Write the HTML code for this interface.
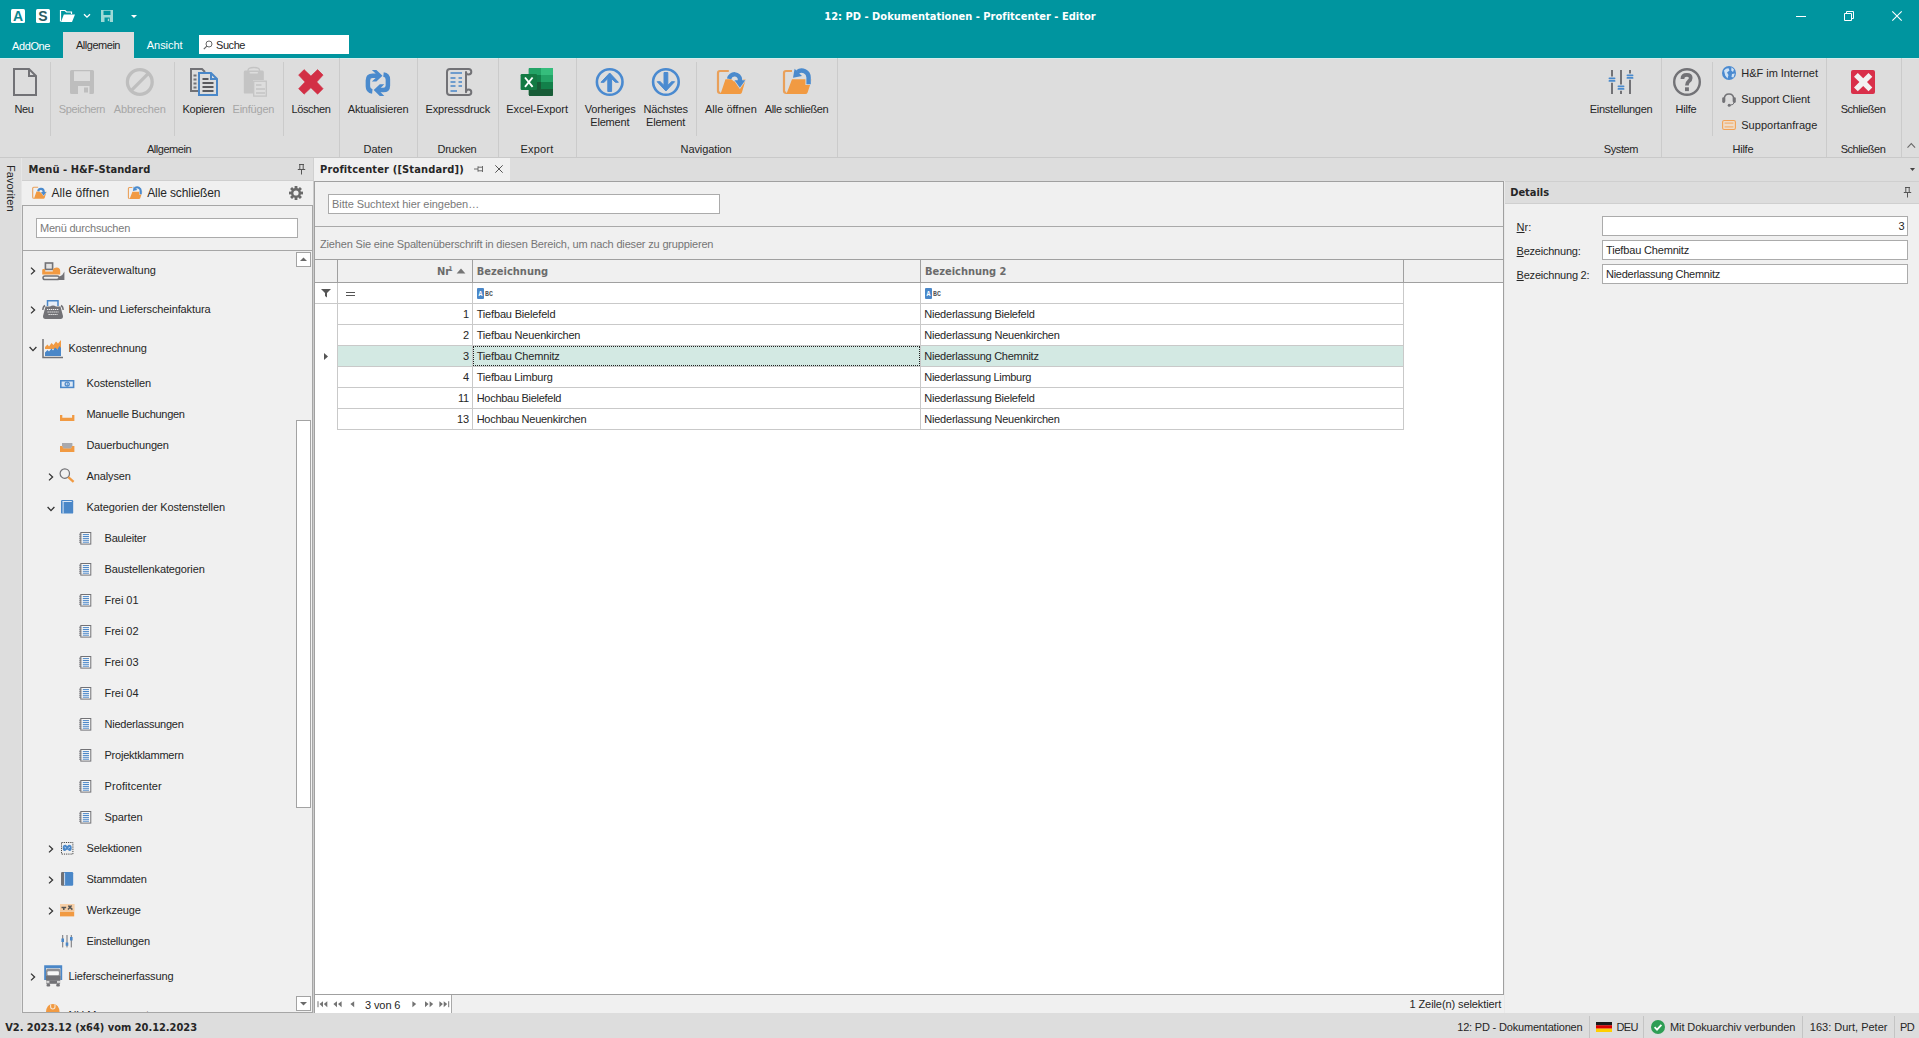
<!DOCTYPE html>
<html lang="de">
<head>
<meta charset="utf-8">
<title>12: PD - Dokumentationen - Profitcenter - Editor</title>
<style>
*{box-sizing:border-box;margin:0;padding:0}
html,body{width:1919px;height:1038px;overflow:hidden;background:#dddddd}
body{font-family:"Liberation Sans",sans-serif;font-size:11px;color:#262626;letter-spacing:-0.17px}
#app{position:relative;width:1919px;height:1038px;overflow:hidden;background:#dddddd}
.a{position:absolute;white-space:nowrap}
.b{font-family:"DejaVu Sans Condensed","DejaVu Sans","Liberation Sans",sans-serif;font-stretch:condensed;font-weight:bold;letter-spacing:0}
.t{position:absolute;white-space:nowrap;line-height:14px;height:14px}
.c{text-align:center}
svg{position:absolute;overflow:visible}
/* ribbon */
.rl{position:absolute;top:103px;width:120px;margin-left:-60px;text-align:center;line-height:13px;white-space:nowrap}
.gl{position:absolute;top:142px;width:120px;margin-left:-60px;text-align:center;line-height:14px;color:#3a3a3a}
.gs{position:absolute;top:58px;height:99px;width:1px;background:#cbcbcb}
.is{position:absolute;top:62px;height:74px;width:1px;background:#cbcbcb}
.dis{color:#a6a6a6}
/* tree */
.tr{position:absolute;left:0;white-space:nowrap;line-height:14px;height:14px}
/* grid */
.cell{position:absolute;height:21px;line-height:20px;white-space:nowrap;border-right:1px solid #c6c6c6;border-bottom:1px solid #c6c6c6;background:#fff;padding:0 3px}
.sel{background:#d0e6e2}
.hd{position:absolute;top:259px;height:23px;line-height:22px;background:#f0f0f0;border-right:1px solid #a9a9a9;border-bottom:1px solid #a9a9a9;color:#6e6e6e;padding:0 4px}
.inp{position:absolute;background:#fff;border:1px solid #ababab;height:20px;line-height:18px;padding:0 3px;white-space:nowrap}
.sb{position:absolute;top:1015px;height:23px;line-height:23px;white-space:nowrap}
.sbs{position:absolute;top:1016px;height:22px;width:1px;background:#c4c4c4}
</style>
</head>
<body>
<div id="app">
<!--TITLE-->
<div class="a" style="left:0;top:0;width:1919px;height:58px;background:#00959f"></div>
<!-- app icons -->
<div class="a c" style="left:11px;top:9px;width:14px;height:14px;background:#fff;border-radius:1.5px;color:#0a858f;font-weight:bold;font-size:14px;line-height:14.5px;letter-spacing:0">A</div>
<div class="a c" style="left:36px;top:9px;width:14px;height:14px;background:#fff;border-radius:1.5px;color:#2b5a61;font-weight:bold;font-size:14px;line-height:14.5px;letter-spacing:0">S</div>
<svg style="left:60px;top:9px" width="16" height="14" viewBox="0 0 16 14"><path d="M0.5 12.5V1.5H5l1.5 1.5H11.5V5" fill="none" stroke="#fff" stroke-width="1.2"/><path d="M1 13L3.8 5.5H15L12 13Z" fill="#fff"/></svg>
<svg style="left:83px;top:13px" width="8" height="6" viewBox="0 0 8 6"><path d="M1 1.2L4 4.2L7 1.2" fill="none" stroke="#fff" stroke-width="1.3"/></svg>
<svg style="left:101px;top:10px" width="12" height="12" viewBox="0 0 12 12"><path d="M0 0H12V12H0Z M2.5 0.8V5H9.5V0.8Z M3.5 7.5V12H8.8V7.5Z" fill="#9fd9d6" fill-rule="evenodd"/><rect x="6.8" y="8.7" width="1.3" height="2.4" fill="#9fd9d6"/></svg>
<svg style="left:131px;top:15px" width="6" height="3" viewBox="0 0 6 3"><path d="M0 0H6L3 3Z" fill="#fff"/></svg>
<!-- window title -->
<div class="t b" style="left:824.3px;top:10px;color:#fff;letter-spacing:0.02px">12: PD - Dokumentationen - Profitcenter - Editor</div>
<!-- window buttons -->
<svg style="left:1796px;top:16px" width="10" height="2" viewBox="0 0 10 2"><rect x="0" y="0" width="10" height="1" fill="#fff"/></svg>
<svg style="left:1844px;top:11px" width="10" height="10" viewBox="0 0 10 10"><path d="M0.5 2.5H7.5V9.5H0.5Z M2.5 2.5V0.5H9.5V7.5H7.5" fill="none" stroke="#fff" stroke-width="1"/></svg>
<svg style="left:1892px;top:11px" width="10" height="10" viewBox="0 0 10 10"><path d="M0.3 0.3L9.7 9.7M9.7 0.3L0.3 9.7" fill="none" stroke="#fff" stroke-width="1.1"/></svg>
<!-- tabs -->
<div class="t" style="left:12px;top:39px;color:#fff;letter-spacing:-0.38px">AddOne</div>
<div class="a" style="left:63px;top:32px;width:71px;height:26px;background:#dddddd"></div>
<div class="t" style="left:76px;top:38px;color:#262626;letter-spacing:-0.48px">Allgemein</div>
<div class="t" style="left:146.8px;top:38px;color:#fff;letter-spacing:-0.05px">Ansicht</div>
<div class="a" style="left:199px;top:35px;width:150px;height:19px;background:#fff"></div>
<svg style="left:203px;top:40px" width="10" height="10" viewBox="0 0 10 10"><circle cx="6" cy="4" r="3" fill="none" stroke="#666" stroke-width="1"/><path d="M3.8 6.2L0.8 9.2" stroke="#666" stroke-width="1.2"/></svg>
<div class="t" style="left:216px;top:38px;color:#262626;letter-spacing:-0.43px">Suche</div>
<!--RIBBON-->
<div class="a" style="left:0;top:58px;width:63px;height:1px;background:#d6ecec"></div>
<div class="a" style="left:134px;top:58px;width:1785px;height:1px;background:#d6ecec"></div>
<div class="a" style="left:0;top:157px;width:1919px;height:1px;background:#c9c9c9"></div>
<!-- separators -->
<div class="is" style="left:50px"></div><div class="is" style="left:174px"></div><div class="is" style="left:283px"></div><div class="is" style="left:696px"></div><div class="is" style="left:1712px"></div>
<div class="gs" style="left:339px"></div><div class="gs" style="left:417px"></div><div class="gs" style="left:498px"></div><div class="gs" style="left:576px"></div><div class="gs" style="left:837px"></div>
<div class="gs" style="left:1661px"></div><div class="gs" style="left:1826px"></div><div class="gs" style="left:1901px"></div>
<!-- icons: drawn in page coordinates -->
<svg style="left:0;top:58px" width="1919" height="100" viewBox="0 58 1919 100">
<!-- Neu -->
<path d="M14 69H29L36 76V95H14Z M29 69V76H36" fill="none" stroke="#727276" stroke-width="2" stroke-linejoin="miter"/>
<!-- Speichern (disabled) -->
<path d="M71.5 70H92.5Q94 70 94 71.5V92.5Q94 94 92.5 94H89.5V86H78V94H71.5Q70 94 70 92.5V71.5Q70 70 71.5 70Z M74 71.3V81H90V71.3Z" fill="#bebebe" fill-rule="evenodd"/>
<rect x="84" y="87.5" width="4" height="5" fill="#bebebe"/>
<!-- Abbrechen (disabled) -->
<circle cx="139.8" cy="82" r="12.4" fill="none" stroke="#bebebe" stroke-width="3.3"/>
<path d="M131.2 90.6L148.4 73.4" stroke="#bebebe" stroke-width="3.3"/>
<!-- Kopieren -->
<path d="M198 91H191V69H202L205 72" fill="none" stroke="#727276" stroke-width="2"/>
<path d="M193.5 75.5H196.5M193.5 79.5H196.5M193.5 83.5H196.5M193.5 87.5H196.5" stroke="#727276" stroke-width="1.8"/>
<path d="M199 73H211L217 79V95H199Z M211 73V79H217" fill="none" stroke="#4a87c8" stroke-width="2"/>
<path d="M202.5 79H208.5M202.5 83H213.5M202.5 87H213.5M202.5 91H213.5" stroke="#5a5a5e" stroke-width="1.9"/>
<!-- Einfügen (disabled) -->
<path d="M245 70.5H262.5Q263.8 70.5 263.8 72V80H253V93.6H245Q243.8 93.6 243.8 92.4V72Q243.8 70.5 245 70.5Z" fill="#c4c4c4"/>
<path d="M248 72.5V70.5Q248 67.5 253.8 67.5T259.6 70.5V72.5Z" fill="none" stroke="#c4c4c4" stroke-width="1.3"/>
<rect x="249.5" y="72" width="8.6" height="1.6" rx="0.8" fill="#dddddd"/>
<rect x="253.7" y="81.2" width="12.6" height="14.9" fill="none" stroke="#c4c4c4" stroke-width="1.3"/>
<path d="M256 85H261.5M256 89H265M256 93H265" stroke="#c4c4c4" stroke-width="1.7"/>
<!-- Löschen -->
<path d="M304.1 69.6L310.9 76.0L317.6 69.6L323.1 75.1L316.8 81.9L323.1 88.7L317.6 94.2L310.9 87.8L304.1 94.2L298.6 88.7L305.0 81.9L298.6 75.1Z" fill="#d22f45" stroke="#d22f45" stroke-width="0.6" stroke-linejoin="round"/>
<!-- Aktualisieren -->
<g fill="none" stroke="#4a8acd" stroke-width="4.5">
<path d="M377 75.8H372.6Q367.9 75.8 367.9 80.5V86.3Q367.9 91 372.3 91.4"/>
<path d="M379 90.1H383.2Q387.9 90.1 387.9 85.4V79.6Q387.9 75 383.5 74.5"/>
</g>
<path d="M371.9 70.1H376.4L382.5 75.8L376.4 81.6H371.9L375.6 77.9V73.6Z M384.3 84.3H379.8L373.7 90.1L379.8 95.9H384.3L380.6 92.2V88Z" fill="#4a8acd"/>
<!-- Expressdruck -->
<path d="M466 69H450Q447 69 447 72V92Q447 95 450 95H468.5Q471.3 95 471.3 92.2Q471.3 89.6 468.6 89.6Q466 89.6 466 92.2V72Q466 74.6 468.6 74.6Q471.3 74.6 471.3 71.8Q471.3 69 468.5 69H466" fill="none" stroke="#727276" stroke-width="2" stroke-linejoin="round"/>
<path d="M450.5 73H462M450.5 78H455.5M450.5 82H455.5M450.5 86H455.5M450.5 91H457M458.5 78H462M458.5 82H462M458.5 86H462" stroke="#4a87c8" stroke-width="1.7"/>
<!-- Excel -->
<rect x="528.8" y="68" width="24.2" height="28" rx="1.5" fill="#1f7c47"/>
<rect x="541" y="68" width="12" height="7" fill="#35bd7c"/><path d="M551.5 68Q553 68 553 69.5V75H541V68Z" fill="#35bd7c"/>
<rect x="528.8" y="68" width="12.2" height="7" fill="#23a366"/>
<rect x="541" y="75" width="12" height="7" fill="#23a366"/>
<rect x="528.8" y="75" width="12.2" height="7" fill="#12804a"/>
<rect x="541" y="82" width="12" height="7" fill="#12804a"/>
<rect x="528.8" y="82" width="24.2" height="14" rx="1.5" fill="#185c37"/><rect x="541" y="82" width="12" height="7" fill="#12804a"/><rect x="528.8" y="82" width="12.2" height="7" fill="#185c37"/>
<rect x="520.6" y="74" width="16.4" height="16" rx="1.2" fill="#137a43"/>
<path d="M525 77.5L532.6 86.8M532.6 77.5L525 86.8" stroke="#fff" stroke-width="1.9"/>
<!-- Vorheriges -->
<circle cx="609.7" cy="82" r="12.8" fill="none" stroke="#4a8ad0" stroke-width="2.6"/>
<path d="M609.7 73L618.4 82.3L615.4 82.3L611.6 78.6V91.5H607.8V78.6L604 82.3L601 82.3Z" fill="#4a8ad0" stroke="#4a8ad0" stroke-width="1" stroke-linejoin="round"/>
<!-- Nächstes -->
<circle cx="665.9" cy="82" r="12.8" fill="none" stroke="#4a8ad0" stroke-width="2.6"/>
<path d="M665.9 91L674.6 81.7L671.6 81.7L667.8 85.4V72.5H664V85.4L660.2 81.7L657.2 81.7Z" fill="#4a8ad0" stroke="#4a8ad0" stroke-width="1" stroke-linejoin="round"/>
<!-- Alle öffnen -->
<path d="M728.8 71H720Q718 71 718 73V91Q718 92.9 720.2 92.9" fill="none" stroke="#e9a05a" stroke-width="2.2"/>
<path d="M725.5 79.2H745.8L741.9 92.4Q741.3 93.9 739.6 93.9H719.5L721.2 92Z" fill="#f19a42"/>
<g fill="none" stroke="#dddddd" stroke-width="6.4"><path d="M731.5 79.4A5.4 5.4 0 0 1 740 79.6V82"/></g>
<path d="M733.2 79.4H746.6L739.9 89Z" fill="#dddddd"/>
<path d="M729.1 78.8A5.5 5.5 0 0 1 740 79.6V81.5" fill="none" stroke="#4a8acd" stroke-width="4.4"/>
<path d="M734.5 80.3H745.3L739.9 87.8Z" fill="#4a8acd"/>
<!-- Alle schließen -->
<path d="M792 71H786Q784 71 784 73V91Q784 92.9 786.2 92.9" fill="none" stroke="#e9a05a" stroke-width="2.2"/>
<path d="M792 79.2H812L807.6 92.4Q807 93.9 805.3 93.9H785.5L787.2 92Z" fill="#f19a42"/>
<path d="M808.6 85V79" fill="none" stroke="#dddddd" stroke-width="6.4"/>
<path d="M808.6 84.2V77.5A7 7 0 0 0 797.4 71.9" fill="none" stroke="#4a8acd" stroke-width="4.4"/>
<path d="M793 77.8L794.6 68.7L802 76Z" fill="#4a8acd"/>
<!-- Einstellungen -->
<path d="M1612 70V94M1621 70V94M1630 70V94" stroke="#727276" stroke-width="2"/>
<g stroke="#dddddd" stroke-width="6.4"><path d="M1608.6 79.6H1615.4M1617.6 87.6H1624.4M1626.6 76.6H1633.4"/></g>
<g stroke="#4a8acd" stroke-width="1.7" stroke-linecap="round"><path d="M1609.4 78.3H1614.6M1609.4 80.9H1614.6M1618.4 86.3H1623.6M1618.4 88.9H1623.6M1627.4 75.3H1632.6M1627.4 77.9H1632.6"/></g>
<!-- Hilfe -->
<circle cx="1687" cy="82" r="12.8" fill="none" stroke="#727276" stroke-width="2.4"/>
<path d="M1682.4 79Q1682.4 74.9 1686.8 74.9Q1690.7 74.9 1690.7 78Q1690.7 80 1688.6 81.4Q1686.9 82.6 1686.9 85.6" fill="none" stroke="#727276" stroke-width="3.7"/>
<rect x="1685" y="87.3" width="3.9" height="3.8" fill="#727276"/>
<!-- globe -->
<circle cx="1729" cy="73" r="7" fill="#4a8ad0"/>
<path d="M1724 70.5Q1726 68 1728.5 68.2L1729.5 70.5L1727 72.5L1728.5 75L1727.5 78.5L1725.2 75.5Z M1731.5 67.2L1734 69.5L1733 72L1731.2 70.5Z M1732 74L1734.8 73.5L1733.5 77.5L1731.5 77Z" fill="#cfe2f5"/>
<!-- headset -->
<path d="M1724.4 101V98.8Q1724.4 94 1729 94Q1733.6 94 1733.6 98.8V101" fill="none" stroke="#727276" stroke-width="1.5"/>
<rect x="1722.2" y="97.3" width="3" height="5.6" rx="1.3" fill="#727276"/><rect x="1732.8" y="97.3" width="3" height="5.6" rx="1.3" fill="#727276"/>
<path d="M1734.2 102.5Q1733.8 105 1730 105.2" fill="none" stroke="#727276" stroke-width="1"/><circle cx="1729.2" cy="105.2" r="1.5" fill="#727276"/>
<!-- supportanfrage -->
<rect x="1722.6" y="120.5" width="12.8" height="9" rx="1.6" fill="#efdcc8" stroke="#f2a255" stroke-width="1.1"/>
<path d="M1724.6 123.1H1733.4M1724.6 126.9H1733.4" stroke="#f2a255" stroke-width="0.9"/>
<!-- Schließen -->
<rect x="1851" y="70" width="24" height="24" rx="2" fill="#d9304a"/>
<path d="M1857.8 73.0L1863.2 78.3L1868.5 73.0L1872.3 76.8L1867.0 82.1L1872.3 87.4L1868.5 91.2L1863.2 85.9L1857.8 91.2L1854.0 87.4L1859.4 82.1L1854.0 76.8Z" fill="#f2f2f2"/>
<!-- collapse chevron -->
<path d="M1907.5 147.6L1911.3 143.6L1915.1 147.6" fill="none" stroke="#6a6a6a" stroke-width="1.1"/>
</svg>
<!-- labels -->
<div class="t" style="left:14.4px;top:102px;letter-spacing:-0.29px">Neu</div>
<div class="t" style="left:182.5px;top:102px;letter-spacing:-0.24px">Kopieren</div>
<div class="t" style="left:291.5px;top:102px;letter-spacing:-0.39px">Löschen</div>
<div class="t" style="left:347.75px;top:102px;letter-spacing:-0.17px">Aktualisieren</div>
<div class="t" style="left:425.6px;top:102px;letter-spacing:-0.19px">Expressdruck</div>
<div class="t" style="left:506.25px;top:102px;letter-spacing:-0.06px">Excel-Export</div>
<div class="t" style="left:584.75px;top:102px;letter-spacing:-0.18px">Vorheriges</div>
<div class="t" style="left:643.5px;top:102px;letter-spacing:-0.19px">Nächstes</div>
<div class="t" style="left:705px;top:102px;letter-spacing:-0.00px">Alle öffnen</div>
<div class="t" style="left:764.75px;top:102px;letter-spacing:-0.35px">Alle schließen</div>
<div class="t" style="left:1589.75px;top:102px;letter-spacing:-0.26px">Einstellungen</div>
<div class="t" style="left:1675.6px;top:102px;letter-spacing:-0.23px">Hilfe</div>
<div class="t" style="left:1840.7px;top:102px;letter-spacing:-0.47px">Schließen</div>
<div class="t dis" style="left:58.75px;top:102px;letter-spacing:-0.35px">Speichern</div>
<div class="t dis" style="left:113.75px;top:102px;letter-spacing:-0.15px">Abbrechen</div>
<div class="t dis" style="left:232.5px;top:102px;letter-spacing:-0.21px">Einfügen</div>
<div class="t" style="left:590.25px;top:115px;letter-spacing:-0.18px">Element</div>
<div class="t" style="left:646px;top:115px;letter-spacing:-0.18px">Element</div>
<div class="t" style="left:1741.25px;top:66px;letter-spacing:-0.02px">H&amp;F im Internet</div>
<div class="t" style="left:1741.25px;top:92px;letter-spacing:-0.06px">Support Client</div>
<div class="t" style="left:1741.25px;top:118px;letter-spacing:0.02px">Supportanfrage</div>
<div class="t" style="left:146.9px;top:142px;letter-spacing:-0.46px">Allgemein</div>
<div class="t" style="left:363.5px;top:142px;letter-spacing:-0.03px">Daten</div>
<div class="t" style="left:437.5px;top:142px;letter-spacing:-0.29px">Drucken</div>
<div class="t" style="left:520.6px;top:142px;letter-spacing:0.16px">Export</div>
<div class="t" style="left:680.6px;top:142px;letter-spacing:-0.10px">Navigation</div>
<div class="t" style="left:1603.75px;top:142px;letter-spacing:-0.39px">System</div>
<div class="t" style="left:1732.5px;top:142px;letter-spacing:-0.25px">Hilfe</div>
<div class="t" style="left:1840.7px;top:142px;letter-spacing:-0.47px">Schließen</div>
<!--LEFT-->
<div class="a" style="left:0;top:158px;width:21px;height:855px;background:#dddddd"></div>
<div class="a" style="left:21px;top:158px;width:1px;height:855px;background:#e6e6e6"></div>
<div class="a" style="left:16px;top:164.5px;transform-origin:0 0;transform:rotate(90deg);line-height:11px;height:11px;white-space:nowrap;letter-spacing:0.08px">Favoriten</div>
<div class="a" style="left:22px;top:158px;width:291px;height:22px;background:#dddddd"></div>
<div class="a" style="left:22px;top:180px;width:291px;height:1px;background:#cfcfcf"></div>
<div class="t b" style="left:28.6px;top:163px;color:#262626;letter-spacing:0.07px">Menü - H&amp;F-Standard</div>
<svg style="left:297px;top:164px" width="9" height="11" viewBox="0 0 9 11"><path d="M2 0.5H7M2.8 0.5V5M6.2 0.5V5M0.8 5.5H8.2M4.5 5.5V10.5" fill="none" stroke="#555" stroke-width="1"/></svg>
<div class="a" style="left:22px;top:181px;width:291px;height:24px;background:#f0f0f0"></div>
<svg style="left:0;top:0" width="320" height="210" viewBox="0 0 320 210"><g transform="translate(-326.3,151.8) scale(0.5)"><path d="M728.8 71H720Q718 71 718 73V91Q718 92.9 720.2 92.9" fill="none" stroke="#e9a05a" stroke-width="2.2"/><path d="M725.5 79.2H745.8L741.9 92.4Q741.3 93.9 739.6 93.9H719.5L721.2 92Z" fill="#f19a42"/><g fill="none" stroke="#f0f0f0" stroke-width="6.4"><path d="M731.5 79.4A5.4 5.4 0 0 1 740 79.6V82"/></g><path d="M733.2 79.4H746.6L739.9 89Z" fill="#f0f0f0"/><path d="M729.1 78.8A5.5 5.5 0 0 1 740 79.6V81.5" fill="none" stroke="#4a8acd" stroke-width="4.4"/><path d="M734.5 80.3H745.3L739.9 87.8Z" fill="#4a8acd"/></g></svg>
<div class="t" style="left:51.4px;top:186px;font-size:12px;letter-spacing:0.14px">Alle öffnen</div>
<svg style="left:0;top:0" width="320" height="210" viewBox="0 0 320 210"><g transform="translate(-263.6,152.05) scale(0.5)"><path d="M792 71H786Q784 71 784 73V91Q784 92.9 786.2 92.9" fill="none" stroke="#e9a05a" stroke-width="2.2"/><path d="M792 79.2H812L807.6 92.4Q807 93.9 805.3 93.9H785.5L787.2 92Z" fill="#f19a42"/><path d="M808.6 85V79" fill="none" stroke="#f0f0f0" stroke-width="6.4"/><path d="M808.6 84.2V77.5A7 7 0 0 0 797.4 71.9" fill="none" stroke="#4a8acd" stroke-width="4.4"/><path d="M793 77.8L794.6 68.7L802 76Z" fill="#4a8acd"/></g></svg>
<div class="t" style="left:147.2px;top:186px;font-size:12px;letter-spacing:-0.11px">Alle schließen</div>
<svg style="left:289px;top:186px" width="14" height="14" viewBox="-7 -7 14 14"><g fill="#6a6a6a"><rect x="-1.4" y="-7" width="2.8" height="14" transform="rotate(0)"/><rect x="-1.4" y="-7" width="2.8" height="14" transform="rotate(45)"/><rect x="-1.4" y="-7" width="2.8" height="14" transform="rotate(90)"/><rect x="-1.4" y="-7" width="2.8" height="14" transform="rotate(135)"/></g><circle r="5" fill="#6a6a6a"/><circle r="2.6" fill="#f0f0f0"/></svg>
<div class="a" style="left:22px;top:205px;width:291px;height:46px;background:#f0f0f0;border:1px solid #a6a6a6;border-bottom:none"></div>
<div class="inp" style="left:36px;top:218px;width:262px;color:#7a7a7a"><span style="letter-spacing:-0.22px">Menü durchsuchen</span></div>
<div class="a" style="left:22px;top:250px;width:291px;height:763px;background:#f0f0f0;border:1px solid #a6a6a6;overflow:hidden">
<svg style="left:7.0px;top:15.800000000000011px" width="6" height="8" viewBox="0 0 6 8"><path d="M1 0.6L4.6 4L1 7.4" fill="none" stroke="#333" stroke-width="1.3"/></svg>
<svg style="left:19px;top:11.300000000000011px" width="23" height="18.5" viewBox="0 0 23 18.5"><rect x="3.4" y="1" width="7.2" height="6.4" fill="#e4e4e4" stroke="#727276" stroke-width="1.6"/><path d="M0.2 8.2Q0.2 7 1.5 7H3.2V9.4H10.8V7.6Q12.2 5.4 14.6 5.4Q18.2 5.4 18.2 9V12.6H0.2Z" fill="#f19a42"/><path d="M22.4 9.4V18.1H14.4L17.6 14.6Q20.8 13.4 22.4 9.4Z" fill="#727276"/><path d="M3 13.9H15.2Q17.2 13.9 17.2 15.8Q17.2 17.6 15.2 17.6H3Q1 17.6 1 15.8Q1 13.9 3 13.9Z" fill="none" stroke="#727276" stroke-width="1.5"/></svg>
<div class="tr" style="left:45.5px;top:12px;letter-spacing:0.04px">Geräteverwaltung</div>
<svg style="left:7.0px;top:54.80000000000001px" width="6" height="8" viewBox="0 0 6 8"><path d="M1 0.6L4.6 4L1 7.4" fill="none" stroke="#333" stroke-width="1.3"/></svg>
<svg style="left:19px;top:49px" width="22" height="19.5" viewBox="0 0 22 19.5"><path d="M5.5 6V0.8H16V6" fill="#e6eef8" stroke="#4a87c8" stroke-width="1.5"/><path d="M3 5.5Q1 6.5 0.8 10" fill="none" stroke="#727276" stroke-width="1.4"/><path d="M19 5.5Q21 6.5 21.2 10" fill="none" stroke="#727276" stroke-width="1.4"/><path d="M3.5 6.5H8Q11 4.5 14 6.5H18.5L21 16Q21.2 19 18.5 19H3.5Q0.8 19 1 16Z" fill="#727276"/><path d="M5 9.5H17M5.5 12H16.5M6.5 14.5H15.5" stroke="#f0f0f0" stroke-width="1.2" stroke-dasharray="1.3 0.7"/></svg>
<div class="tr" style="left:45.5px;top:51px;letter-spacing:-0.12px">Klein- und Lieferscheinfaktura</div>
<svg style="left:5.600000000000001px;top:95.30000000000001px" width="8" height="6" viewBox="0 0 8 6"><path d="M0.6 1L4 4.6L7.4 1" fill="none" stroke="#333" stroke-width="1.3"/></svg>
<svg style="left:19px;top:88px" width="22" height="19.5" viewBox="0 0 22 19.5"><path d="M1 0V18.5H21" fill="none" stroke="#727276" stroke-width="1.5"/><path d="M3 8L5.5 5.5L7 7.5L9.5 4L11.5 6L14 2.5L16 4.5L19 1V10H3Z" fill="#f19a42"/><path d="M3 13.5L5.5 11L7 12.5L9.5 9.5L11 11.5L13 8.5L15.5 10.5L17.5 7L19 9V17H3Z" fill="#4a87c8"/></svg>
<div class="tr" style="left:45.5px;top:90px;letter-spacing:-0.14px">Kostenrechnung</div>
<svg style="left:37px;top:128.8px" width="14.4" height="8.2" viewBox="0 0 14.4 8.2"><rect x="0" y="0" width="14.4" height="8.2" fill="#4a87c8"/><rect x="1.6" y="1.5" width="11.2" height="5.2" fill="#dce8f6"/><circle cx="7.2" cy="4.1" r="2.7" fill="#4a87c8"/><circle cx="7.2" cy="4.1" r="1.5" fill="#dce8f6"/><rect x="6.8" y="2.2" width="0.9" height="3.8" fill="#4a87c8"/></svg>
<div class="tr" style="left:63.5px;top:125px;letter-spacing:-0.11px">Kostenstellen</div>
<svg style="left:37px;top:163.89999999999998px" width="14.4" height="6" viewBox="0 0 14.4 6"><path d="M0 0H2.3V2.8H12.1V0H14.4V6H0Z" fill="#f19a42"/></svg>
<div class="tr" style="left:63.5px;top:156px;letter-spacing:-0.29px">Manuelle Buchungen</div>
<svg style="left:37px;top:191.8px" width="14.4" height="9" viewBox="0 0 14.4 9"><path d="M2 0H12.4V3L11.2 5.8H3.2L2 3Z" fill="#a9a9ad"/><path d="M0 3H2.2L3.4 5.6H11L12.2 3H14.4V9H0Z" fill="#f19a42"/></svg>
<div class="tr" style="left:63.5px;top:187px;letter-spacing:-0.15px">Dauerbuchungen</div>
<svg style="left:25.1px;top:222px" width="6" height="8" viewBox="0 0 6 8"><path d="M1 0.6L4.6 4L1 7.4" fill="none" stroke="#333" stroke-width="1.3"/></svg>
<svg style="left:36.2px;top:217.39999999999998px" width="15.5" height="14.5" viewBox="0 0 15.5 14.5"><circle cx="5.8" cy="5.6" r="4.7" fill="none" stroke="#727276" stroke-width="1.2"/><path d="M9.3 9.2L14.6 13.8" stroke="#f19a42" stroke-width="2.3"/></svg>
<div class="tr" style="left:63.5px;top:218px;letter-spacing:-0.11px">Analysen</div>
<svg style="left:23.6px;top:254.5px" width="8" height="6" viewBox="0 0 8 6"><path d="M0.6 1L4 4.6L7.4 1" fill="none" stroke="#333" stroke-width="1.3"/></svg>
<svg style="left:38px;top:249.2px" width="12.2" height="13.6" viewBox="0 0 12.2 13.6"><rect x="0" y="0" width="12.2" height="13.6" rx="1.2" fill="#4a87c8"/><path d="M1.4 1.5H10.8" stroke="#dce8f6" stroke-width="1"/><path d="M2.1 2V13.6" stroke="#dce8f6" stroke-width="1"/></svg>
<div class="tr" style="left:63.5px;top:249px;letter-spacing:-0.10px">Kategorien der Kostenstellen</div>
<svg style="left:55.8px;top:281.20000000000005px" width="12.4" height="12.6" viewBox="0 0 12.4 12.6"><rect x="1.8" y="0.5" width="10" height="11.6" fill="#f7f7f7" stroke="#727276" stroke-width="1"/><path d="M0 2.2H2.4M0 4.2H2.4M0 6.2H2.4M0 8.2H2.4M0 10.2H2.4" stroke="#727276" stroke-width="0.9"/><path d="M3.8 2.6H10M3.8 4.5H10M3.8 6.4H10M3.8 8.3H10M3.8 10.2H10" stroke="#4a87c8" stroke-width="1"/></svg>
<div class="tr" style="left:81.5px;top:280px;letter-spacing:-0.18px">Bauleiter</div>
<svg style="left:55.8px;top:312.20000000000005px" width="12.4" height="12.6" viewBox="0 0 12.4 12.6"><rect x="1.8" y="0.5" width="10" height="11.6" fill="#f7f7f7" stroke="#727276" stroke-width="1"/><path d="M0 2.2H2.4M0 4.2H2.4M0 6.2H2.4M0 8.2H2.4M0 10.2H2.4" stroke="#727276" stroke-width="0.9"/><path d="M3.8 2.6H10M3.8 4.5H10M3.8 6.4H10M3.8 8.3H10M3.8 10.2H10" stroke="#4a87c8" stroke-width="1"/></svg>
<div class="tr" style="left:81.5px;top:311px;letter-spacing:-0.13px">Baustellenkategorien</div>
<svg style="left:55.8px;top:343.20000000000005px" width="12.4" height="12.6" viewBox="0 0 12.4 12.6"><rect x="1.8" y="0.5" width="10" height="11.6" fill="#f7f7f7" stroke="#727276" stroke-width="1"/><path d="M0 2.2H2.4M0 4.2H2.4M0 6.2H2.4M0 8.2H2.4M0 10.2H2.4" stroke="#727276" stroke-width="0.9"/><path d="M3.8 2.6H10M3.8 4.5H10M3.8 6.4H10M3.8 8.3H10M3.8 10.2H10" stroke="#4a87c8" stroke-width="1"/></svg>
<div class="tr" style="left:81.5px;top:342px;letter-spacing:-0.04px">Frei 01</div>
<svg style="left:55.8px;top:374.20000000000005px" width="12.4" height="12.6" viewBox="0 0 12.4 12.6"><rect x="1.8" y="0.5" width="10" height="11.6" fill="#f7f7f7" stroke="#727276" stroke-width="1"/><path d="M0 2.2H2.4M0 4.2H2.4M0 6.2H2.4M0 8.2H2.4M0 10.2H2.4" stroke="#727276" stroke-width="0.9"/><path d="M3.8 2.6H10M3.8 4.5H10M3.8 6.4H10M3.8 8.3H10M3.8 10.2H10" stroke="#4a87c8" stroke-width="1"/></svg>
<div class="tr" style="left:81.5px;top:373px;letter-spacing:-0.04px">Frei 02</div>
<svg style="left:55.8px;top:405.20000000000005px" width="12.4" height="12.6" viewBox="0 0 12.4 12.6"><rect x="1.8" y="0.5" width="10" height="11.6" fill="#f7f7f7" stroke="#727276" stroke-width="1"/><path d="M0 2.2H2.4M0 4.2H2.4M0 6.2H2.4M0 8.2H2.4M0 10.2H2.4" stroke="#727276" stroke-width="0.9"/><path d="M3.8 2.6H10M3.8 4.5H10M3.8 6.4H10M3.8 8.3H10M3.8 10.2H10" stroke="#4a87c8" stroke-width="1"/></svg>
<div class="tr" style="left:81.5px;top:404px;letter-spacing:-0.04px">Frei 03</div>
<svg style="left:55.8px;top:436.20000000000005px" width="12.4" height="12.6" viewBox="0 0 12.4 12.6"><rect x="1.8" y="0.5" width="10" height="11.6" fill="#f7f7f7" stroke="#727276" stroke-width="1"/><path d="M0 2.2H2.4M0 4.2H2.4M0 6.2H2.4M0 8.2H2.4M0 10.2H2.4" stroke="#727276" stroke-width="0.9"/><path d="M3.8 2.6H10M3.8 4.5H10M3.8 6.4H10M3.8 8.3H10M3.8 10.2H10" stroke="#4a87c8" stroke-width="1"/></svg>
<div class="tr" style="left:81.5px;top:435px;letter-spacing:-0.04px">Frei 04</div>
<svg style="left:55.8px;top:467.20000000000005px" width="12.4" height="12.6" viewBox="0 0 12.4 12.6"><rect x="1.8" y="0.5" width="10" height="11.6" fill="#f7f7f7" stroke="#727276" stroke-width="1"/><path d="M0 2.2H2.4M0 4.2H2.4M0 6.2H2.4M0 8.2H2.4M0 10.2H2.4" stroke="#727276" stroke-width="0.9"/><path d="M3.8 2.6H10M3.8 4.5H10M3.8 6.4H10M3.8 8.3H10M3.8 10.2H10" stroke="#4a87c8" stroke-width="1"/></svg>
<div class="tr" style="left:81.5px;top:466px;letter-spacing:-0.23px">Niederlassungen</div>
<svg style="left:55.8px;top:498.20000000000005px" width="12.4" height="12.6" viewBox="0 0 12.4 12.6"><rect x="1.8" y="0.5" width="10" height="11.6" fill="#f7f7f7" stroke="#727276" stroke-width="1"/><path d="M0 2.2H2.4M0 4.2H2.4M0 6.2H2.4M0 8.2H2.4M0 10.2H2.4" stroke="#727276" stroke-width="0.9"/><path d="M3.8 2.6H10M3.8 4.5H10M3.8 6.4H10M3.8 8.3H10M3.8 10.2H10" stroke="#4a87c8" stroke-width="1"/></svg>
<div class="tr" style="left:81.5px;top:497px;letter-spacing:-0.23px">Projektklammern</div>
<svg style="left:55.8px;top:529.2px" width="12.4" height="12.6" viewBox="0 0 12.4 12.6"><rect x="1.8" y="0.5" width="10" height="11.6" fill="#f7f7f7" stroke="#727276" stroke-width="1"/><path d="M0 2.2H2.4M0 4.2H2.4M0 6.2H2.4M0 8.2H2.4M0 10.2H2.4" stroke="#727276" stroke-width="0.9"/><path d="M3.8 2.6H10M3.8 4.5H10M3.8 6.4H10M3.8 8.3H10M3.8 10.2H10" stroke="#4a87c8" stroke-width="1"/></svg>
<div class="tr" style="left:81.5px;top:528px;letter-spacing:0.09px">Profitcenter</div>
<svg style="left:55.8px;top:560.2px" width="12.4" height="12.6" viewBox="0 0 12.4 12.6"><rect x="1.8" y="0.5" width="10" height="11.6" fill="#f7f7f7" stroke="#727276" stroke-width="1"/><path d="M0 2.2H2.4M0 4.2H2.4M0 6.2H2.4M0 8.2H2.4M0 10.2H2.4" stroke="#727276" stroke-width="0.9"/><path d="M3.8 2.6H10M3.8 4.5H10M3.8 6.4H10M3.8 8.3H10M3.8 10.2H10" stroke="#4a87c8" stroke-width="1"/></svg>
<div class="tr" style="left:81.5px;top:559px;letter-spacing:-0.07px">Sparten</div>
<svg style="left:25.1px;top:593.7px" width="6" height="8" viewBox="0 0 6 8"><path d="M1 0.6L4.6 4L1 7.4" fill="none" stroke="#333" stroke-width="1.3"/></svg>
<svg style="left:38px;top:590.5px" width="12.4" height="12.6" viewBox="0 0 12.4 12.6"><rect x="0.5" y="0.5" width="11.4" height="11.6" fill="none" stroke="#444" stroke-width="1" stroke-dasharray="1.2 1"/><path d="M1.7 6Q1.7 2.6 4.6 2.8L6.2 4L7.8 2.8Q10.7 2.6 10.7 6Q10.7 9.2 8.4 8.9L6.2 7.5L4 8.9Q1.7 9.2 1.7 6Z" fill="#4a87c8"/><path d="M3.6 5.2L5 6.2M8.8 5.2L7.4 6.2" stroke="#e6eef8" stroke-width="0.9"/></svg>
<div class="tr" style="left:63.5px;top:590px;letter-spacing:-0.21px">Selektionen</div>
<svg style="left:25.1px;top:624.7px" width="6" height="8" viewBox="0 0 6 8"><path d="M1 0.6L4.6 4L1 7.4" fill="none" stroke="#333" stroke-width="1.3"/></svg>
<svg style="left:38px;top:621.3000000000001px" width="12.2" height="13.8" viewBox="0 0 12.2 13.8"><path d="M1.2 0H3V13.8H1.2Q0 13.8 0 12.6V1.2Q0 0 1.2 0Z" fill="#727276"/><path d="M3 0H11Q12.2 0 12.2 1.2V12.6Q12.2 13.8 11 13.8H3Z" fill="#4a87c8"/><path d="M3.6 0.8V13" stroke="#dce8f6" stroke-width="0.9"/></svg>
<div class="tr" style="left:63.5px;top:621px;letter-spacing:-0.23px">Stammdaten</div>
<svg style="left:25.1px;top:655.7px" width="6" height="8" viewBox="0 0 6 8"><path d="M1 0.6L4.6 4L1 7.4" fill="none" stroke="#333" stroke-width="1.3"/></svg>
<svg style="left:36.9px;top:652.5px" width="14.2" height="12.4" viewBox="0 0 14.2 12.4"><rect x="0" y="0" width="14.2" height="12.4" fill="#f19a42"/><rect x="0" y="0" width="14.2" height="6.6" fill="#f7cfa6"/><path d="M1.5 3.4H6.2M3.8 3.4V6M8 5.6L11.6 1.6M8.4 1.6L12.4 5.6" stroke="#555" stroke-width="1.5"/><path d="M0 7.2H14.2" stroke="#f0f0f0" stroke-width="0.8"/></svg>
<div class="tr" style="left:63.5px;top:652px;letter-spacing:-0.12px">Werkzeuge</div>
<svg style="left:38px;top:683.7px" width="12" height="12.4" viewBox="0 0 12 12.4"><path d="M1.7 0V12.4M6 0V12.4M10.3 0V12.4" stroke="#727276" stroke-width="1"/><path d="M1.7 3.6V7M6 7.4V10.8M10.3 2V5.4" stroke="#4a87c8" stroke-width="2.6"/></svg>
<div class="tr" style="left:63.5px;top:683px;letter-spacing:-0.21px">Einstellungen</div>
<svg style="left:7.0px;top:722px" width="6" height="8" viewBox="0 0 6 8"><path d="M1 0.6L4.6 4L1 7.4" fill="none" stroke="#333" stroke-width="1.3"/></svg>
<svg style="left:20.799999999999997px;top:713.8px" width="19" height="21" viewBox="0 0 19 21"><path d="M0.2 0.2H18.2V15H16.4V3.2H2V15H0.2Z" fill="#4a87c8"/><path d="M2 15.2V5.6Q2 3.8 3.8 3.8H14.6Q16.4 3.8 16.4 5.6V15.2Z" fill="#8e8e92"/><rect x="3.5" y="6.3" width="11.4" height="3.9" rx="0.9" fill="#f6f6f6"/><rect x="2" y="10.8" width="14.4" height="4.4" fill="#727276"/><rect x="2.3" y="15.2" width="13.8" height="3.6" fill="#727276"/><rect x="2.4" y="15.9" width="3" height="2" fill="#d9d9d9"/><rect x="13" y="15.9" width="3" height="2" fill="#d9d9d9"/><rect x="2.5" y="19" width="3.7" height="2.4" rx="1" fill="#727276"/><rect x="12.2" y="19" width="3.7" height="2.4" rx="1" fill="#727276"/></svg>
<div class="tr" style="left:45.5px;top:718px;letter-spacing:-0.13px">Lieferscheinerfassung</div>
<svg style="left:23.1px;top:752.7px" width="13.6" height="9.5" viewBox="0 0 13.6 9.5"><path d="M0 9.5Q0 0 6.8 0Q13.6 0 13.6 9.5Z" fill="#f19a42"/><path d="M4.6 0.6V2.8Q4.6 5 6.8 5Q9 5 9 2.8V0.6" fill="none" stroke="#f6e6d4" stroke-width="1.1"/></svg>
<div class="tr" style="left:45.5px;top:757px;letter-spacing:-0.27px">NU-Management</div>
<div class="a" style="left:273px;top:1px;width:15px;height:15px;background:#fff;border:1px solid #a3a3a3"></div><svg style="left:273px;top:1px" width="15" height="15" viewBox="0 0 15 15"><path d="M4 9L7.5 5.5L11 9Z" fill="#6a6a6a"/></svg>
<div class="a" style="left:273px;top:744.5px;width:15px;height:15px;background:#fff;border:1px solid #a3a3a3"></div><svg style="left:273px;top:744.5px" width="15" height="15" viewBox="0 0 15 15"><path d="M4 6L7.5 9.5L11 6Z" fill="#6a6a6a"/></svg>
<div class="a" style="left:273px;top:169px;width:15px;height:388px;background:#fff;border:1px solid #a3a3a3"></div>
</div>
<!--CENTER-->
<div class="a" style="left:313px;top:158px;width:1px;height:855px;background:#cccccc"></div>
<div class="a" style="left:313px;top:158px;width:1px;height:23px;background:#d0d0d0"></div>
<div class="a" style="left:314px;top:158px;width:196px;height:23px;background:#f0f0f0"></div>
<div class="t b" style="left:320px;top:163px;color:#262626;letter-spacing:0.15px">Profitcenter ([Standard])</div>
<svg style="left:474px;top:165px" width="10" height="8" viewBox="0 0 10 8"><path d="M0 4H4M4 1.3V6.7M4 2.2H8.5M4 5.8H8.5M8.5 1V7" fill="none" stroke="#5e5e5e" stroke-width="0.9"/></svg>
<svg style="left:495px;top:165px" width="8" height="8" viewBox="0 0 8 8"><path d="M0.3 0.3L7.7 7.7M7.7 0.3L0.3 7.7" fill="none" stroke="#555" stroke-width="1"/></svg>
<svg style="left:1910px;top:168px" width="5" height="3" viewBox="0 0 5 3"><path d="M0 0H5L2.5 3Z" fill="#444"/></svg>
<div class="a" style="left:314px;top:181px;width:1190px;height:832px;background:#f0f0f0;border:1px solid #a0a0a0;border-bottom:none"></div>
<div class="a" style="left:1503px;top:995px;width:1px;height:18px;background:#f0f0f0"></div>
<div class="inp" style="left:328px;top:194px;width:392px;color:#7a7a7a"><span style="letter-spacing:-0.05px">Bitte Suchtext hier eingeben…</span></div>
<div class="a" style="left:315px;top:226px;width:1188px;height:1px;background:#a9a9a9"></div>
<div class="t" style="left:320px;top:237px;color:#757575;letter-spacing:-0.17px">Ziehen Sie eine Spaltenüberschrift in diesen Bereich, um nach dieser zu gruppieren</div>
<div class="a" style="left:315px;top:259px;width:1188px;height:735px;background:#fff"></div>
<div class="a" style="left:315px;top:259px;width:1188px;height:24px;background:#f0f0f0;border-top:1px solid #a0a0a0;border-bottom:1px solid #a0a0a0"></div>
<div class="a" style="left:337px;top:260px;width:1px;height:22px;background:#a0a0a0"></div>
<div class="a" style="left:472px;top:260px;width:1px;height:22px;background:#a0a0a0"></div>
<div class="a" style="left:920px;top:260px;width:1px;height:22px;background:#a0a0a0"></div>
<div class="a" style="left:1403px;top:260px;width:1px;height:22px;background:#a0a0a0"></div>
<div class="t b" style="left:437px;top:265px;color:#6b6b6b">Nr</div>
<div class="a b" style="left:448.5px;top:265px;color:#6b6b6b;font-size:6.5px;line-height:8px">1</div>
<svg style="left:456px;top:268px" width="10" height="6" viewBox="0 0 10 6"><path d="M0.6 5.6L5 0.6L9.4 5.6Z" fill="#757575"/></svg>
<div class="t b" style="left:476.7px;top:265px;color:#6b6b6b;letter-spacing:0.02px">Bezeichnung</div>
<div class="t b" style="left:925px;top:265px;color:#6b6b6b;letter-spacing:-0.01px">Bezeichnung 2</div>
<div class="a" style="left:337px;top:283px;width:1px;height:147px;background:#c9c9c9"></div>
<div class="a" style="left:315px;top:303px;width:1089px;height:1px;background:#c9c9c9"></div>
<div class="a" style="left:338px;top:324px;width:1066px;height:1px;background:#c9c9c9"></div>
<div class="a" style="left:338px;top:345px;width:1066px;height:1px;background:#c9c9c9"></div>
<div class="a" style="left:338px;top:366px;width:1066px;height:1px;background:#c9c9c9"></div>
<div class="a" style="left:338px;top:387px;width:1066px;height:1px;background:#c9c9c9"></div>
<div class="a" style="left:338px;top:408px;width:1066px;height:1px;background:#c9c9c9"></div>
<div class="a" style="left:338px;top:429px;width:1066px;height:1px;background:#c9c9c9"></div>
<div class="a" style="left:472px;top:283px;width:1px;height:147px;background:#c9c9c9"></div>
<div class="a" style="left:920px;top:283px;width:1px;height:147px;background:#c9c9c9"></div>
<div class="a" style="left:1403px;top:283px;width:1px;height:147px;background:#c9c9c9"></div>
<div class="a" style="left:338px;top:346px;width:134px;height:20px;background:#d3e9e3"></div>
<div class="a" style="left:473px;top:346px;width:447px;height:20px;background:#d3e9e3;outline:1px dotted #222;outline-offset:-1px"></div>
<div class="a" style="left:921px;top:346px;width:482px;height:20px;background:#d3e9e3"></div>
<svg style="left:321px;top:289px" width="10" height="9" viewBox="0 0 10 9"><path d="M0 0H10L6 4V8.4L4 7V4Z" fill="#555"/></svg>
<svg style="left:346px;top:291px" width="9" height="5" viewBox="0 0 9 5"><path d="M0 1.5H9M0 4.5H9" stroke="#555" stroke-width="1"/></svg>
<div class="a" style="left:477px;top:288px;width:7px;height:11px;background:#4a87c8;border-radius:1px"></div><div class="a" style="left:477px;top:291px;font-family:'Liberation Mono',monospace;font-weight:bold;font-size:6.5px;line-height:8px;letter-spacing:0;color:#555"><span style="color:#fff;display:inline-block;width:7px;text-align:center">A</span><span style="margin-left:1px">BC</span></div>
<div class="a" style="left:925px;top:288px;width:7px;height:11px;background:#4a87c8;border-radius:1px"></div><div class="a" style="left:925px;top:291px;font-family:'Liberation Mono',monospace;font-weight:bold;font-size:6.5px;line-height:8px;letter-spacing:0;color:#555"><span style="color:#fff;display:inline-block;width:7px;text-align:center">A</span><span style="margin-left:1px">BC</span></div>
<div class="t" style="left:338px;top:307px;width:131px;text-align:right">1</div>
<div class="t" style="left:476.7px;top:307px;letter-spacing:-0.17px">Tiefbau Bielefeld</div>
<div class="t" style="left:924.3px;top:307px;letter-spacing:-0.23px">Niederlassung Bielefeld</div>
<div class="t" style="left:338px;top:328px;width:131px;text-align:right">2</div>
<div class="t" style="left:476.7px;top:328px;letter-spacing:-0.18px">Tiefbau Neuenkirchen</div>
<div class="t" style="left:924.3px;top:328px;letter-spacing:-0.23px">Niederlassung Neuenkirchen</div>
<div class="t" style="left:338px;top:349px;width:131px;text-align:right">3</div>
<div class="t" style="left:476.7px;top:349px;letter-spacing:-0.18px">Tiefbau Chemnitz</div>
<div class="t" style="left:924.3px;top:349px;letter-spacing:-0.25px">Niederlassung Chemnitz</div>
<div class="t" style="left:338px;top:370px;width:131px;text-align:right">4</div>
<div class="t" style="left:476.7px;top:370px;letter-spacing:-0.21px">Tiefbau Limburg</div>
<div class="t" style="left:924.3px;top:370px;letter-spacing:-0.30px">Niederlassung Limburg</div>
<div class="t" style="left:338px;top:391px;width:131px;text-align:right">11</div>
<div class="t" style="left:476.7px;top:391px;letter-spacing:-0.28px">Hochbau Bielefeld</div>
<div class="t" style="left:924.3px;top:391px;letter-spacing:-0.23px">Niederlassung Bielefeld</div>
<div class="t" style="left:338px;top:412px;width:131px;text-align:right">13</div>
<div class="t" style="left:476.7px;top:412px;letter-spacing:-0.27px">Hochbau Neuenkirchen</div>
<div class="t" style="left:924.3px;top:412px;letter-spacing:-0.23px">Niederlassung Neuenkirchen</div>
<svg style="left:324px;top:353px" width="4" height="7" viewBox="0 0 4 7"><path d="M0 0L4 3.5L0 7Z" fill="#555"/></svg>
<div class="a" style="left:315px;top:994px;width:1188px;height:19px;background:#f0f0f0;border-top:1px solid #a0a0a0"></div>
<div class="a" style="left:315px;top:995px;width:136px;height:18px;background:#fff"></div>
<div class="a" style="left:451px;top:995px;width:1px;height:18px;background:#a9a9a9"></div>
<svg style="left:315px;top:995px" width="140" height="17" viewBox="315 995 140 17"><g fill="#737373"><rect x="317.5" y="1001.2" width="1" height="6"/><path d="M323 1001.2V1007.2L319.5 1004Z"/><path d="M327.3 1001.2V1007.2L323.8 1004Z"/><path d="M337 1001.2V1007.2L333.4 1004Z"/><path d="M341.6 1001.2V1007.2L338 1004Z"/><path d="M354.2 1001.2V1007.2L350.4 1004Z"/><path d="M412.4 1001.2V1007.2L416.2 1004Z"/><path d="M425 1001.2V1007.2L428.6 1004Z"/><path d="M429.6 1001.2V1007.2L433.2 1004Z"/><path d="M439.4 1001.2V1007.2L442.9 1004Z"/><path d="M443.7 1001.2V1007.2L447.2 1004Z"/><rect x="448.2" y="1001.2" width="1" height="6"/></g></svg>
<div class="t" style="left:365px;top:998px;letter-spacing:-0.10px">3 von 6</div>
<div class="t" style="left:1409.5px;top:997px;letter-spacing:-0.09px">1 Zeile(n) selektiert</div>
<!--RIGHT-->
<div class="a" style="left:1504px;top:181px;width:1px;height:832px;background:#e9e9e9"></div>
<div class="a" style="left:1505px;top:181px;width:414px;height:832px;background:#f0f0f0"></div>
<div class="a" style="left:1505px;top:181px;width:414px;height:23px;background:#dddddd;border-top:1px solid #cfcfcf;border-bottom:1px solid #cfcfcf"></div>
<div class="t b" style="left:1510.2px;top:186px;color:#262626;letter-spacing:-0.02px">Details</div>
<svg style="left:1903px;top:187px" width="9" height="11" viewBox="0 0 9 11"><path d="M2 0.5H7M2.8 0.5V5M6.2 0.5V5M0.8 5.5H8.2M4.5 5.5V10.5" fill="none" stroke="#555" stroke-width="1"/></svg>
<div class="t" style="left:1516.6px;top:220px;letter-spacing:0.01px"><span style="text-decoration:underline">N</span>r:</div>
<div class="inp" style="left:1602px;top:216px;width:306px;text-align:right;"><span style="letter-spacing:-0.60px">3</span></div>
<div class="t" style="left:1516.6px;top:244px;letter-spacing:-0.23px"><span style="text-decoration:underline">B</span>ezeichnung:</div>
<div class="inp" style="left:1602px;top:240px;width:306px;"><span style="letter-spacing:-0.17px">Tiefbau Chemnitz</span></div>
<div class="t" style="left:1516.6px;top:268px;letter-spacing:-0.22px"><span style="text-decoration:underline">B</span>ezeichnung 2:</div>
<div class="inp" style="left:1602px;top:264px;width:306px;"><span style="letter-spacing:-0.27px">Niederlassung Chemnitz</span></div>
<!--STATUS-->
<div class="a" style="left:0;top:1013px;width:1919px;height:25px;background:#dddddd"></div>
<div class="t b" style="left:5.2px;top:1021px;color:#262626;letter-spacing:-0.02px">V2. 2023.12 (x64) vom 20.12.2023</div>
<div class="sbs" style="left:1589px"></div>
<div class="sbs" style="left:1643px"></div>
<div class="sbs" style="left:1802px"></div>
<div class="sbs" style="left:1894px"></div>
<div class="t" style="left:1457.2px;top:1020px;letter-spacing:-0.18px">12: PD - Dokumentationen</div>
<svg style="left:1596px;top:1022px" width="16" height="10" viewBox="0 0 16 10"><rect width="16" height="3.4" fill="#1a1a1a"/><rect y="3.3" width="16" height="3.4" fill="#dd0000"/><rect y="6.6" width="16" height="3.4" fill="#ffce00"/></svg>
<div class="t" style="left:1616.5px;top:1020px;letter-spacing:-0.60px">DEU</div>
<svg style="left:1651px;top:1020px" width="14" height="14" viewBox="0 0 14 14"><circle cx="7" cy="7" r="7" fill="#2f9e55"/><path d="M3.6 7.2L6 9.6L10.4 4.8" fill="none" stroke="#fff" stroke-width="1.8"/></svg>
<div class="t" style="left:1670px;top:1020px;letter-spacing:-0.10px">Mit Dokuarchiv verbunden</div>
<div class="t" style="left:1809.8px;top:1020px;letter-spacing:0.00px">163: Durt, Peter</div>
<div class="t" style="left:1900px;top:1020px;letter-spacing:-0.60px">PD</div>
</div>
</body>
</html>
